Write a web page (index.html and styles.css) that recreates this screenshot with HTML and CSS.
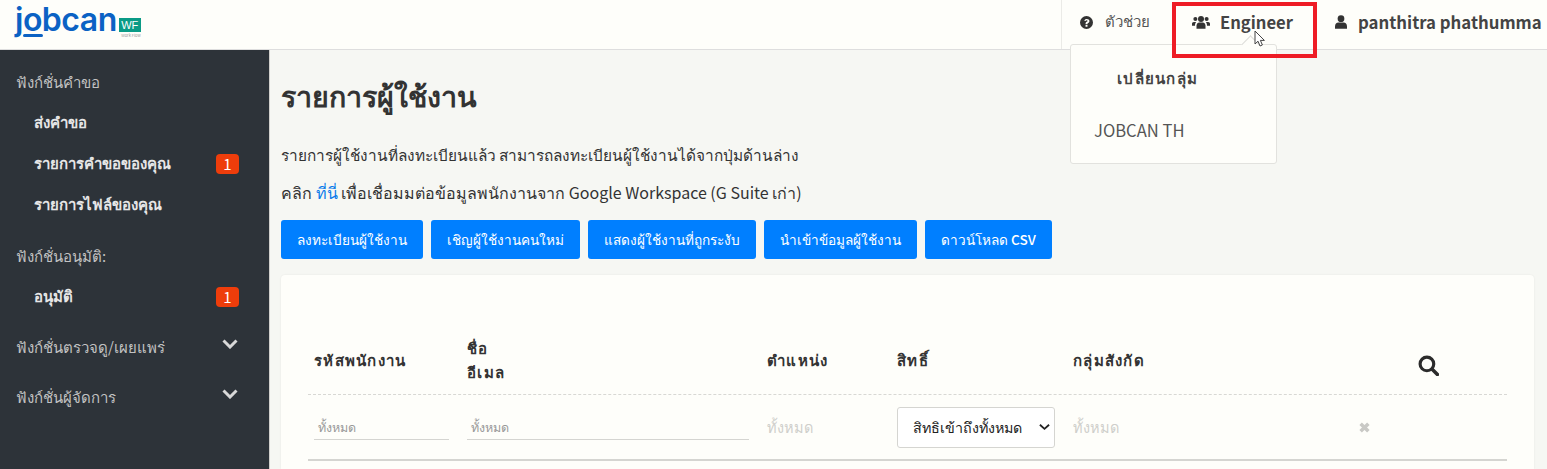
FILE: index.html
```html
<!DOCTYPE html>
<html lang="th">
	<head>
		<meta charset="UTF-8" />
		<title>รายการผู้ใช้งาน</title>
		<link rel="stylesheet" href="styles.css">
	</head>
	<body>
		<header class="topbar">
			<div class="logo">
				<span class="logo-word">jobcan</span>
				<span class="logo-side">
					<span class="logo-badge">WF</span>
					<span class="logo-sub">Work Flow</span>
				</span>
			</div>
			<nav class="topnav">
				<div class="topnav-item help">
					<svg class="icon" viewBox="0 0 24 24" width="13" height="13"><path fill="#333" fill-rule="evenodd" d="M12 0a12 12 0 1 0 0 24 12 12 0 0 0 0-24zm1.8 20h-3.6v-3.4h3.6V20zm3-8.600c-.5.7-1.200 1.200-1.900 1.600-.5.300-.9.700-1 1.300l-.1.700h-3.500v-1c0-1.600 1-2.500 2.100-3.200.8-.5 1.500-.9 1.500-1.700 0-.7-.6-1.200-1.500-1.200-1 0-1.700.6-2.300 1.500L7.700 8.500C8.700 6.700 10.200 5.500 12.500 5.500c2.600 0 4.900 1.500 4.900 3.900 0 .8-.2 1.400-.6 2z"/></svg>
					<span>ตัวช่วย</span>
				</div>
				<div class="topnav-item group">
					<svg class="icon" viewBox="0 0 24 18" width="18" height="14"><g fill="#333"><circle cx="12" cy="5" r="4"/><circle cx="4.500" cy="5" r="2.700"/><circle cx="19.500" cy="5" r="2.700"/><path d="M6 18v-4c0-3 2-4.500 3.500-4.500h5C16 9.500 18 11 18 14v4z"/><path d="M0 14v-2.500C0 10 1 9 2.500 9h3c-.9 1-1.500 2.500-1.500 5zM24 14v-2.500C24 10 23 9 21.500 9h-3c.9 1 1.500 2.500 1.500 5z"/></g></svg>
					<span>Engineer</span>
				</div>
				<div class="topnav-item user">
					<svg class="icon" viewBox="0 0 16 18" width="12" height="14"><g fill="#333"><circle cx="8" cy="4.500" r="4.500"/><path d="M0 18v-3.500C0 11.500 2 9.500 4.500 9.500h7c2.500 0 4.500 2 4.500 5V18z"/></g></svg>
					<span>panthitra phathumma</span>
				</div>
			</nav>
		</header>

		<div class="layout">
			<aside class="sidebar">
				<p class="side-title">ฟังก์ชั่นคำขอ</p>
				<a class="side-link">ส่งคำขอ</a>
				<a class="side-link">รายการคำขอของคุณ <span class="badge">1</span></a>
				<a class="side-link">รายการไฟล์ของคุณ</a>
				<p class="side-title next">ฟังก์ชั่นอนุมัติ:</p>
				<a class="side-link">อนุมัติ <span class="badge">1</span></a>
				<p class="side-title fold">ฟังก์ชั่นตรวจดู/เผยแพร่
					<svg class="chev" viewBox="0 0 16 10" width="16" height="10"><path d="M1.500 1.500 8 8l6.500-6.500" fill="none" stroke="#d8d8d8" stroke-width="3"/></svg>
				</p>
				<p class="side-title fold">ฟังก์ชั่นผู้จัดการ
					<svg class="chev" viewBox="0 0 16 10" width="16" height="10"><path d="M1.500 1.500 8 8l6.500-6.500" fill="none" stroke="#d8d8d8" stroke-width="3"/></svg>
				</p>
			</aside>

			<main class="main">
				<h1 class="page-title">รายการผู้ใช้งาน</h1>
				<p class="desc">รายการผู้ใช้งานที่ลงทะเบียนแล้ว สามารถลงทะเบียนผู้ใช้งานได้จากปุ่มด้านล่าง</p>
				<p class="desc second">คลิก <a class="link">ที่นี่</a> เพื่อเชื่อมมต่อข้อมูลพนักงานจาก Google Workspace (G Suite เก่า)</p>
				<div class="actions">
					<button class="btn">ลงทะเบียนผู้ใช้งาน</button>
					<button class="btn">เชิญผู้ใช้งานคนใหม่</button>
					<button class="btn">แสดงผู้ใช้งานที่ถูกระงับ</button>
					<button class="btn">นำเข้าข้อมูลผู้ใช้งาน</button>
					<button class="btn">ดาวน์โหลด CSV</button>
				</div>
				<section class="card">
					<div class="row head">
						<div>รหัสพนักงาน</div>
						<div>ชื่อ<br>อีเมล</div>
						<div>ตำแหน่ง</div>
						<div>สิทธิ์</div>
						<div>กลุ่มสังกัด</div>
						<div class="cell-icon">
							<svg viewBox="0 0 20 20" width="21" height="21"><circle cx="8.500" cy="8.500" r="6.500" fill="none" stroke="#2b2b2b" stroke-width="3"/><path d="m13.500 13.500 5 5" stroke="#2b2b2b" stroke-width="3.400" stroke-linecap="round"/></svg>
						</div>
					</div>
					<div class="row filters">
						<div class="field">ทั้งหมด</div>
						<div class="field">ทั้งหมด</div>
						<div class="ghost">ทั้งหมด</div>
						<div class="select">สิทธิเข้าถึงทั้งหมด
							<svg viewBox="0 0 12 8" width="11" height="8"><path d="M1 1.500 6 6l5-4.500" fill="none" stroke="#222" stroke-width="2"/></svg>
						</div>
						<div class="ghost">ทั้งหมด</div>
						<div class="cell-clear">
							<svg viewBox="0 0 10 10" width="11" height="11"><path d="m1.500 1.500 7 7m0-7-7 7" stroke="#c9c9c5" stroke-width="3.200"/></svg>
						</div>
					</div>
				</section>
			</main>
		</div>

		<div class="menu">
			<span class="menu-arrow"></span>
			<div class="menu-title">เปลี่ยนกลุ่ม</div>
			<div class="menu-item">JOBCAN TH</div>
		</div>
		<div class="redbox"></div>
		<svg class="cursor" viewBox="0 0 12 18" width="12" height="18"><path d="M1 1v13l3-2.800 2 4.800 2.400-1-2-4.600h4z" fill="#fff" stroke="#444" stroke-width="1"/></svg>
	</body>
</html>
```

FILE: styles.css
```css
html,
body {
	margin: 0;
	height: 469px;
	overflow: hidden;
	background-color: #f6f7f3;
	color: #333;
	font-family: "Noto Sans CJK JP", "Noto Sans", "DejaVu Sans", sans-serif;
	font-size: 13px;
}

p,
h1 {
	margin: 0;
}

.topbar {
	height: 49px;
	display: flex;
	justify-content: space-between;
	background-color: #fefefa;
	border-bottom: 1px solid #dedede;
}

.logo {
	display: flex;
	align-items: flex-start;
	padding-left: 15px;
	color: #0b62c4;
}

.logo-word {
	position: relative;
	font-family: "Inter", sans-serif;
	font-size: 32px;
	font-weight: 600;
	line-height: 40px;
	letter-spacing: -0.5px;
}

/* the bar under the o of the logo */
.logo-word::after {
	content: "";
	position: absolute;
	left: 8px;
	top: 34px;
	width: 20px;
	height: 3px;
	border-radius: 2px;
	background-color: #0b62c4;
}

.logo-side {
	display: flex;
	flex-direction: column;
	margin: 18px 0 0 2px;
}

.logo-badge {
	width: 22px;
	height: 14px;
	background-color: #0b9b86;
	color: #fff;
	font-family: "Liberation Sans", sans-serif;
	font-size: 11px;
	line-height: 14px;
	text-align: center;
}

.logo-sub {
	font-size: 4px;
	line-height: 6px;
	color: #999;
	text-align: right;
}

.topnav {
	display: flex;
	align-items: center;
	height: 49px;
	border-left: 1px solid #ebebe7;
	padding: 0 0 5px 18px;
	width: 486px;
	box-sizing: border-box;
}

.topnav-item {
	display: flex;
	align-items: center;
	white-space: nowrap;
}

.help {
	gap: 12px;
	width: 112px;
	color: #555;
	font-size: 15px;
}

.group {
	gap: 10px;
	width: 143px;
	font-size: 16.600px;
	font-weight: 700;
	color: #444;
}

.user {
	gap: 11px;
	font-size: 16.800px;
	font-weight: 700;
	color: #444;
}

.layout {
	display: flex;
	height: 419px;
}

.sidebar {
	width: 269px;
	flex-shrink: 0;
	padding-top: 20px;
	background-color: #2d3339;
	border-right: 1px solid #d0d0cc;
}

.side-title {
	position: relative;
	height: 24px;
	line-height: 24px;
	padding-left: 16px;
	color: #c2c2c2;
	font-size: 15px;
}

.side-title.next {
	margin-top: 27px;
}

.side-title.fold {
	margin-top: 26px;
	display: flex;
	justify-content: space-between;
	align-items: flex-start;
	padding-right: 31px;
}

.chev {
	margin-top: 4px;
}

.side-link {
	display: flex;
	justify-content: space-between;
	align-items: center;
	height: 24px;
	margin-top: 17px;
	padding: 0 30px 0 34px;
	color: #e6e6e6;
	font-size: 15px;
	font-weight: 700;
}

.badge {
	width: 23px;
	height: 20px;
	border-radius: 4px;
	background-color: #ee3d0b;
	color: #fff;
	font-size: 15px;
	font-weight: 400;
	line-height: 20px;
	text-align: center;
}

.main {
	flex: 1;
	padding: 0 13px 0 11px;
	min-width: 0;
}

.page-title {
	margin-top: 25px;
	font-size: 28.600px;
	font-weight: 700;
	line-height: 40px;
	color: #333;
}

.desc {
	margin-top: 29px;
	line-height: 20px;
	font-size: 15.400px;
	color: #333;
}

.desc.second {
	margin-top: 18px;
	font-size: 16px;
}

.link {
	color: #0b7bea;
}

.actions {
	display: flex;
	gap: 8px;
	margin-top: 18px;
}

.btn {
	height: 39px;
	padding: 0 16px;
	border: 0;
	border-radius: 3px;
	background-color: #007fff;
	color: #fff;
	font-family: inherit;
	font-size: 13.600px;
	font-weight: 500;
}

.card {
	margin-top: 16px;
	padding: 56px 27px 0;
	height: 138px;
	background-color: #fefefa;
	border-radius: 4px 4px 0 0;
	box-shadow: 0 0 2px rgba(0, 0, 0, 0.08);
}

.row {
	display: grid;
	grid-template-columns: 153px 300px 130px 176px 286px 1fr;
	padding-left: 6px;
}

.row.head {
	height: 57px;
	padding-bottom: 6px;
	align-items: center;
	border-bottom: 1px dashed #d8d8d4;
	font-size: 15px;
	font-weight: 700;
	letter-spacing: 1.300px;
	line-height: 24px;
	color: #333;
}

.cell-icon {
	padding-left: 59px;
	height: 21px;
	margin-top: 12px;
}

.row.filters {
	height: 64px;
	align-items: center;
	border-bottom: 2px solid #d5d5d1;
}

.field {
	height: 24px;
	margin-right: 18px;
	padding-left: 4px;
	line-height: 24px;
	border-bottom: 1px solid #d5d5d1;
	color: #999;
	font-size: 12.500px;
}

.ghost {
	color: #cfcfcb;
	font-size: 14.500px;
}

.select {
	display: flex;
	justify-content: space-between;
	align-items: center;
	width: 158px;
	height: 41px;
	box-sizing: border-box;
	padding: 0 4px 0 15px;
	background-color: #fff;
	border: 1px solid #d5d5d1;
	border-radius: 3px;
	color: #222;
	font-size: 14.300px;
	white-space: nowrap;
}

.cell-clear {
	height: 11px;
	line-height: 0;
}

.menu {
	position: absolute;
	left: 1070px;
	top: 44px;
	width: 205px;
	height: 118px;
	background-color: #fefefa;
	border: 1px solid #e2e2de;
	border-radius: 3px;
}

.menu-arrow {
	position: absolute;
	left: 173px;
	top: -7px;
	width: 12px;
	height: 12px;
	background-color: #fefefa;
	border-left: 1px solid #dcdcd8;
	border-top: 1px solid #dcdcd8;
	transform: rotate(45deg);
}

.menu-title {
	margin: 22px 0 0 46px;
	font-size: 15px;
	font-weight: 700;
	letter-spacing: 1.300px;
	line-height: 22px;
	color: #444;
}

.menu-item {
	margin: 30px 0 0 23px;
	font-size: 16.600px;
	line-height: 22px;
	color: #555;
}

.redbox {
	position: absolute;
	left: 1172px;
	top: 2px;
	width: 137px;
	height: 48px;
	border: 4px solid #ee1c25;
}

.cursor {
	position: absolute;
	left: 1254px;
	top: 30px;
}
```
